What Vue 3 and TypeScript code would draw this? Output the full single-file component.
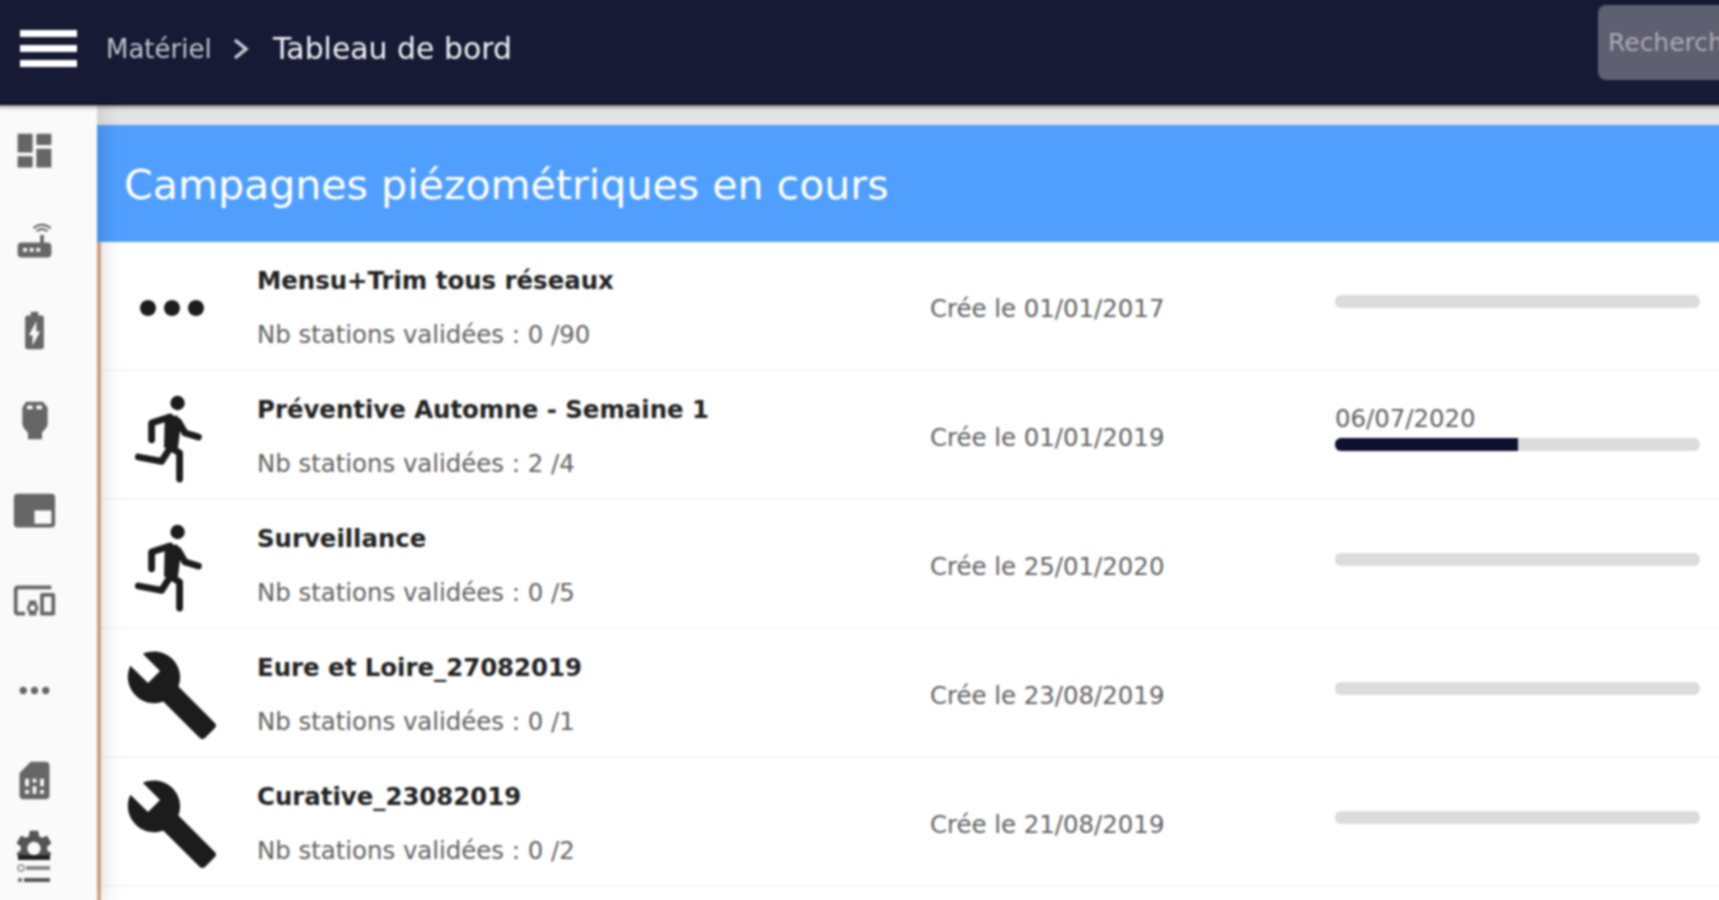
<script setup lang="ts">
interface Campaign {
  icon: 'dots' | 'run' | 'build'
  name: string
  stations: string
  created: string
  date?: string
  progress: number
}

const iconPaths: Record<Campaign['icon'], string> = {
  dots: 'M6 10c-1.1 0-2 .9-2 2s.9 2 2 2 2-.9 2-2-.9-2-2-2zm12 0c-1.1 0-2 .9-2 2s.9 2 2 2 2-.9 2-2-.9-2-2-2zm-6 0c-1.1 0-2 .9-2 2s.9 2 2 2 2-.9 2-2-.9-2-2-2z',
  run: 'M13.4 1.700a1.8 1.8 0 1 0 0 3.600a1.8 1.8 0 1 0 0-3.600zM10.200 6.700h3.200l.7 3-.6 5h-3.500z',
  build: 'M22.7 19l-9.1-9.1c.9-2.3.4-5-1.5-6.9-2-2-5-2.4-7.4-1.3L9 6 6 9 1.6 4.7C.4 7.1.9 10.1 2.9 12.1c1.9 1.9 4.6 2.4 6.9 1.5l9.1 9.1c.4.4 1 .4 1.4 0l2.3-2.3c.5-.4.5-1.1.1-1.4z'
}

const runLimbs = 'M6.900 12.700V8.500L11.500 7M13.600 8.100L15.250 11L18.600 12M11.500 14.800L9.400 18.100L3.600 17M11.900 14.800L13.900 16V22.500'

const navIcons: string[] = [
  'M3 13h8V3H3v10zm0 8h8v-6H3v6zm10 0h8V11h-8v10zm0-18v6h8V3h-8z',
  'M20.200 5.900l.8-.8C19.600 3.700 17.800 3 16 3s-3.600.7-5 2.100l.8.8C13 4.800 14.500 4.200 16 4.200s3 .6 4.200 1.700zm-.9.8c-.9-.9-2.100-1.400-3.300-1.400s-2.400.5-3.300 1.400l.8.8c.7-.7 1.600-1 2.500-1 .9 0 1.800.3 2.500 1l.8-.8zM19 13h-2V9h-2v4H5c-1.100 0-2 .9-2 2v4c0 1.100.9 2 2 2h14c1.100 0 2-.9 2-2v-4c0-1.100-.9-2-2-2zM8 18H6v-2h2v2zm3.500 0h-2v-2h2v2zm3.500 0h-2v-2h2v2z',
  'M15.670 4H14V2h-4v2H8.330C7.600 4 7 4.600 7 5.330v15.330C7 21.400 7.600 22 8.330 22h7.330c.74 0 1.340-.6 1.340-1.330V5.330C17 4.600 16.400 4 15.670 4zM11 20v-5.500H9L13 7v5.500h2L11 20z',
  'M7.500 2h9l2.500 3v8c0 3-2 4-3 5.500V22H8.500v-3.500c-1-1.500-3-2.500-3-5.500V5zM8 4v2h3V4zm5 0v2h3V4z',
  'M3 3h18a2 2 0 012 2v14a2 2 0 01-2 2H3a2 2 0 01-2-2V5a2 2 0 012-2zm9 9v7h9v-7z',
  'M3 6h18V4H3c-1.100 0-2 .9-2 2v12c0 1.100.9 2 2 2h4v-2H3V6zm10 6H9v1.780c-.61.55-1 1.330-1 2.220s.39 1.670 1 2.220V20h4v-1.780c.61-.55 1-1.340 1-2.220s-.39-1.670-1-2.220V12zm-2 5.500c-.83 0-1.500-.67-1.500-1.500s.67-1.500 1.500-1.500 1.500.67 1.500 1.500-.67 1.500-1.500 1.500zM22 8h-6c-.5 0-1 .5-1 1v10c0 .5.5 1 1 1h6c.5 0 1-.5 1-1V9c0-.5-.5-1-1-1zm-1 10h-4v-8h4v8z',
  'M6 10c-1.100 0-2 .9-2 2s.9 2 2 2 2-.9 2-2-.9-2-2-2zm12 0c-1.100 0-2 .9-2 2s.9 2 2 2 2-.9 2-2-.9-2-2-2zm-6 0c-1.100 0-2 .9-2 2s.9 2 2 2 2-.9 2-2-.9-2-2-2z',
  'M19.990 4c0-1.100-.89-2-1.990-2h-8L4 8v12c0 1.100.9 2 2 2h12c1.100 0 2-.9 2-2l-.01-16zM9 19H7v-2h2v2zm8 0h-2v-2h2v2zm-8-4H7v-4h2v4zm4 4h-2v-4h2v4zm0-6h-2v-2h2v2zm4 2h-2v-4h2v4z'
]

const gear = 'M19.140 12.940c.04-.3.06-.61.06-.94 0-.32-.02-.64-.07-.94l2.030-1.580c.18-.14.23-.41.12-.61l-1.920-3.320c-.12-.22-.37-.29-.59-.22l-2.390.96c-.5-.38-1.030-.7-1.620-.94l-.36-2.540c-.04-.24-.24-.41-.48-.41h-3.840c-.24 0-.43.17-.47.41l-.36 2.540c-.59.24-1.130.57-1.620.94l-2.390-.96c-.22-.08-.47 0-.59.22L2.740 8.870c-.12.21-.08.47.12.61l2.030 1.580c-.05.3-.09.63-.09.94s.02.64.07.94l-2.030 1.580c-.18.14-.23.41-.12.61l1.920 3.320c.12.22.37.29.59.22l2.390-.96c.5.38 1.030.7 1.620.94l.36 2.54c.05.24.24.41.48.41h3.840c.24 0 .44-.17.47-.41l.36-2.540c.59-.24 1.130-.56 1.620-.94l2.390.96c.22.08.47 0 .59-.22l1.920-3.320c.12-.22.07-.47-.12-.61l-2.010-1.580zM12 15.600c-1.980 0-3.600-1.620-3.600-3.600s1.620-3.600 3.600-3.600 3.600 1.620 3.600 3.600-1.620 3.600-3.600 3.600z'

const campaigns: Campaign[] = [
  { icon: 'dots', name: 'Mensu+Trim tous réseaux', stations: 'Nb stations validées : 0 /90', created: 'Crée le 01/01/2017', progress: 0 },
  { icon: 'run', name: 'Préventive Automne - Semaine 1', stations: 'Nb stations validées : 2 /4', created: 'Crée le 01/01/2019', date: '06/07/2020', progress: 50 },
  { icon: 'run', name: 'Surveillance', stations: 'Nb stations validées : 0 /5', created: 'Crée le 25/01/2020', progress: 0 },
  { icon: 'build', name: 'Eure et Loire_27082019', stations: 'Nb stations validées : 0 /1', created: 'Crée le 23/08/2019', progress: 0 },
  { icon: 'build', name: 'Curative_23082019', stations: 'Nb stations validées : 0 /2', created: 'Crée le 21/08/2019', progress: 0 }
]
</script>

<template>
  <div class="viewport">
    <div class="page">
      <header class="topbar">
        <div class="burger"><span></span><span></span><span></span></div>
        <span class="crumb">Matériel</span>
        <svg class="chevron" viewBox="0 0 18 24"><path d="M3 3l11 9-11 9" fill="none" stroke="#c9cad2" stroke-width="3.500" /></svg>
        <span class="title">Tableau de bord</span>
        <div class="search">Recherche</div>
      </header>
      <div class="body">
        <nav class="sidebar">
          <div v-for="(d, i) in navIcons" :key="i" class="nav-item">
            <svg viewBox="0 0 24 24" fill-rule="evenodd"><path :d="d" fill="#666" /></svg>
          </div>
          <div class="nav-item last">
            <svg viewBox="0 0 38 53">
              <path :d="gear" fill="#555" transform="translate(-3.100 -3.700) scale(1.840)" />
              <rect x="0" y="26" width="38" height="27" fill="#fafafa" />
              <rect x="3" y="25" width="32" height="5" fill="#222" />
              <circle cx="6" cy="38" r="3" fill="none" stroke="#888" stroke-width="1.500" />
              <rect x="11" y="36" width="24" height="4" fill="#888" />
              <rect x="3" y="48" width="4" height="4" fill="#777" />
              <rect x="9" y="48" width="26" height="4" fill="#555" />
            </svg>
          </div>
        </nav>
        <main class="content">
          <h1 class="banner">Campagnes piézométriques en cours</h1>
          <ul class="list">
            <li v-for="c in campaigns" :key="c.name" class="row">
              <svg class="row-icon" viewBox="0 0 24 24">
                <path :d="iconPaths[c.icon]" fill="#1c1c1c" />
                <path v-if="c.icon === 'run'" :d="runLimbs" fill="none" stroke="#1c1c1c" stroke-width="1.700" stroke-linejoin="round" stroke-linecap="round" />
              </svg>
              <div class="info">
                <div class="name">{{ c.name }}</div>
                <div class="stations">{{ c.stations }}</div>
              </div>
              <div class="created">{{ c.created }}</div>
              <div class="progress">
                <div v-if="c.date" class="date">{{ c.date }}</div>
                <div class="track"><div class="fill" :style="{ width: c.progress + '%' }"></div></div>
              </div>
            </li>
          </ul>
        </main>
      </div>
    </div>
  </div>
</template>

<style>
html, body { margin: 0; background: #fff; overflow: hidden; }
</style>

<style scoped>
.viewport { width: 1719px; height: 900px; overflow: hidden; }
.page { width: 1727px; height: 908px; margin: -4px 0 0 -4px; overflow: hidden; display: flex; flex-direction: column; font-family: "DejaVu Sans", sans-serif; filter: blur(0.8px); }
.topbar { height: 109px; flex: none; box-sizing: border-box; border-bottom: 2px solid #0b0d2a; background: #161a35; display: flex; align-items: center; padding: 4px 0 6px 24px; position: relative; z-index: 2; box-shadow: 0 2px 4px rgba(0,0,0,.45); }
.burger { width: 57px; display: flex; flex-direction: column; gap: 8px; margin-right: 29px; }
.burger span { height: 7px; background: #fff; }
.crumb { color: #c4c5cc; font-size: 26px; width: 126px; }
.chevron { width: 18px; height: 24px; flex: none; }
.title { color: #f2f2f4; font-size: 29.900px; margin-left: 23px; }
.search { position: absolute; left: 1602px; top: 9px; width: 200px; height: 75px; box-sizing: border-box; padding: 0 10px; border-radius: 8px; background: #5e5f70; color: #a9aab4; font-size: 25px; line-height: 75px; }
.body { flex: 1; display: flex; min-height: 0; background: #e4e4e4; }
.sidebar { width: 101px; flex: none; background: #fafafa; position: relative; z-index: 1; box-shadow: 4px 0 22px rgba(0,0,0,.16); }
.nav-item { height: 90px; display: flex; align-items: center; padding-left: 15.500px; }
.nav-item svg { width: 45px; height: 45px; }
.nav-item.last { height: 62px; padding-left: 19px; }
.nav-item.last svg { width: 38px; height: 53px; }
.content { flex: 1; min-width: 0; padding-top: 20px; }
.banner { margin: 0; height: 117px; box-sizing: border-box; padding: 2px 0 0 27px; background: #509fff; color: #fff; font-size: 41.100px; font-weight: 400; line-height: 117px; }
.list { margin: 0; padding: 0; list-style: none; border-left: 4px solid #e2b08c; background: #fff; height: 100%; }
.row { height: 129px; box-sizing: border-box; padding-top: 5px; border-bottom: 2px solid #f6f6f6; display: flex; align-items: center; }
.row-icon { width: 96px; height: 96px; flex: none; margin-left: 23px; }
.info { width: 673px; flex: none; margin-left: 37px; }
.name { font-size: 24.400px; font-weight: 700; color: #222; line-height: 28px; margin-bottom: 26px; }
.stations { font-size: 24.400px; color: #626262; line-height: 28px; }
.created { width: 405px; flex: none; font-size: 24.400px; color: #626262; }
.progress { width: 365px; flex: none; }
.date { font-size: 24.400px; color: #626262; line-height: 20px; margin-bottom: 9px; }
.track { height: 13px; border-radius: 6px; background: #dcdcdc; overflow: hidden; margin-bottom: 14px; }
.fill { height: 100%; background: #0e1030; }
</style>
